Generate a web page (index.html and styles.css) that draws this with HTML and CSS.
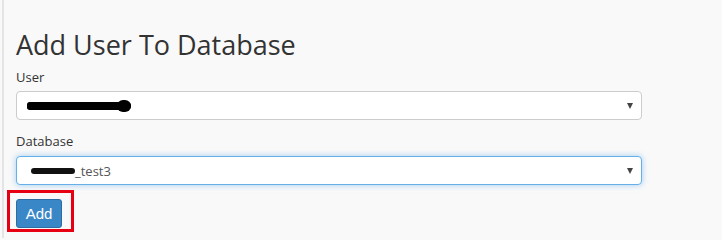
FILE: index.html
```html
<!DOCTYPE html>
<html>
<head>
<meta charset="utf-8">
<link rel="stylesheet" href="styles.css">
</head>
<body>
<div class="page">
  <h1 class="title">Add User To Database</h1>
  <div class="group">
    <label class="label">User</label>
    <div class="select">
      <span class="value"><span class="redact redact-user"></span></span>
      <span class="caret"></span>
    </div>
  </div>
  <div class="group">
    <label class="label">Database</label>
    <div class="select focused">
      <span class="value"><span class="redact redact-db"></span>_test3</span>
      <span class="caret"></span>
    </div>
  </div>
  <div class="actions">
    <span class="highlight"><button class="btn">Add</button></span>
  </div>
</div>
</body>
</html>
```
FILE: styles.css
```css
html, body {
  margin: 0;
  padding: 0;
  background: #f9f9f9;
  height: 100%;
}
body {
  font-family: "Open Sans", "Liberation Sans", sans-serif;
  color: #333;
}
.page {
  margin-left: 2px;
  border-left: 2px solid #e4e4e4;
  padding: 27px 0 0 12px;
  height: 238px;
  box-sizing: border-box;
  width: 640px;
}
.title {
  margin: 0;
  font-size: 27px;
  font-weight: 400;
  line-height: 36px;
  color: #333;
}
.group {
  display: flex;
  flex-direction: column;
}
.label {
  font-size: 13px;
  line-height: 18px;
  margin-top: 5px;
  margin-bottom: 5px;
  color: #333;
}
.group + .group .label {
  margin-top: 12px;
  margin-bottom: 6px;
}
.select {
  height: 29px;
  box-sizing: border-box;
  border: 1px solid #cccccc;
  border-radius: 4px;
  background: #fff;
  display: flex;
  align-items: center;
  justify-content: space-between;
  padding: 0 8px 0 10px;
}
.select.focused {
  border-color: #66afe9;
  box-shadow: 0 0 6px rgba(102, 175, 233, 0.6);
}
.value {
  font-size: 13px;
  color: #555;
  display: flex;
  align-items: center;
}
.redact {
  display: inline-block;
  background: #000;
}
.redact-user {
  position: relative;
  width: 104px;
  height: 8px;
  border-radius: 4px 6px 6px 4px;
}
.redact-user::after {
  content: "";
  position: absolute;
  right: 0;
  top: -2px;
  width: 14px;
  height: 12px;
  border-radius: 6px;
  background: #000;
}
.redact-db {
  width: 44px;
  height: 6px;
  border-radius: 3px;
  margin-left: 4px;
  background: #111;
}
.caret {
  width: 0;
  height: 0;
  border-left: 3px solid transparent;
  border-right: 3px solid transparent;
  border-top: 6px solid #444;
}
.actions {
  margin-top: 5px;
}
.highlight {
  display: inline-block;
  margin-left: -9px;
  padding: 6px 9px 1px 6px;
  border: 3px solid #e60012;
}
.btn {
  display: block;
  font-family: "Liberation Sans", "Open Sans", sans-serif;
  font-size: 15px;
  color: #fff;
  background: #3a87c8;
  border: 1px solid #2e6da4;
  border-radius: 3px;
  width: 46px;
  height: 29px;
  padding: 0;
}
```
